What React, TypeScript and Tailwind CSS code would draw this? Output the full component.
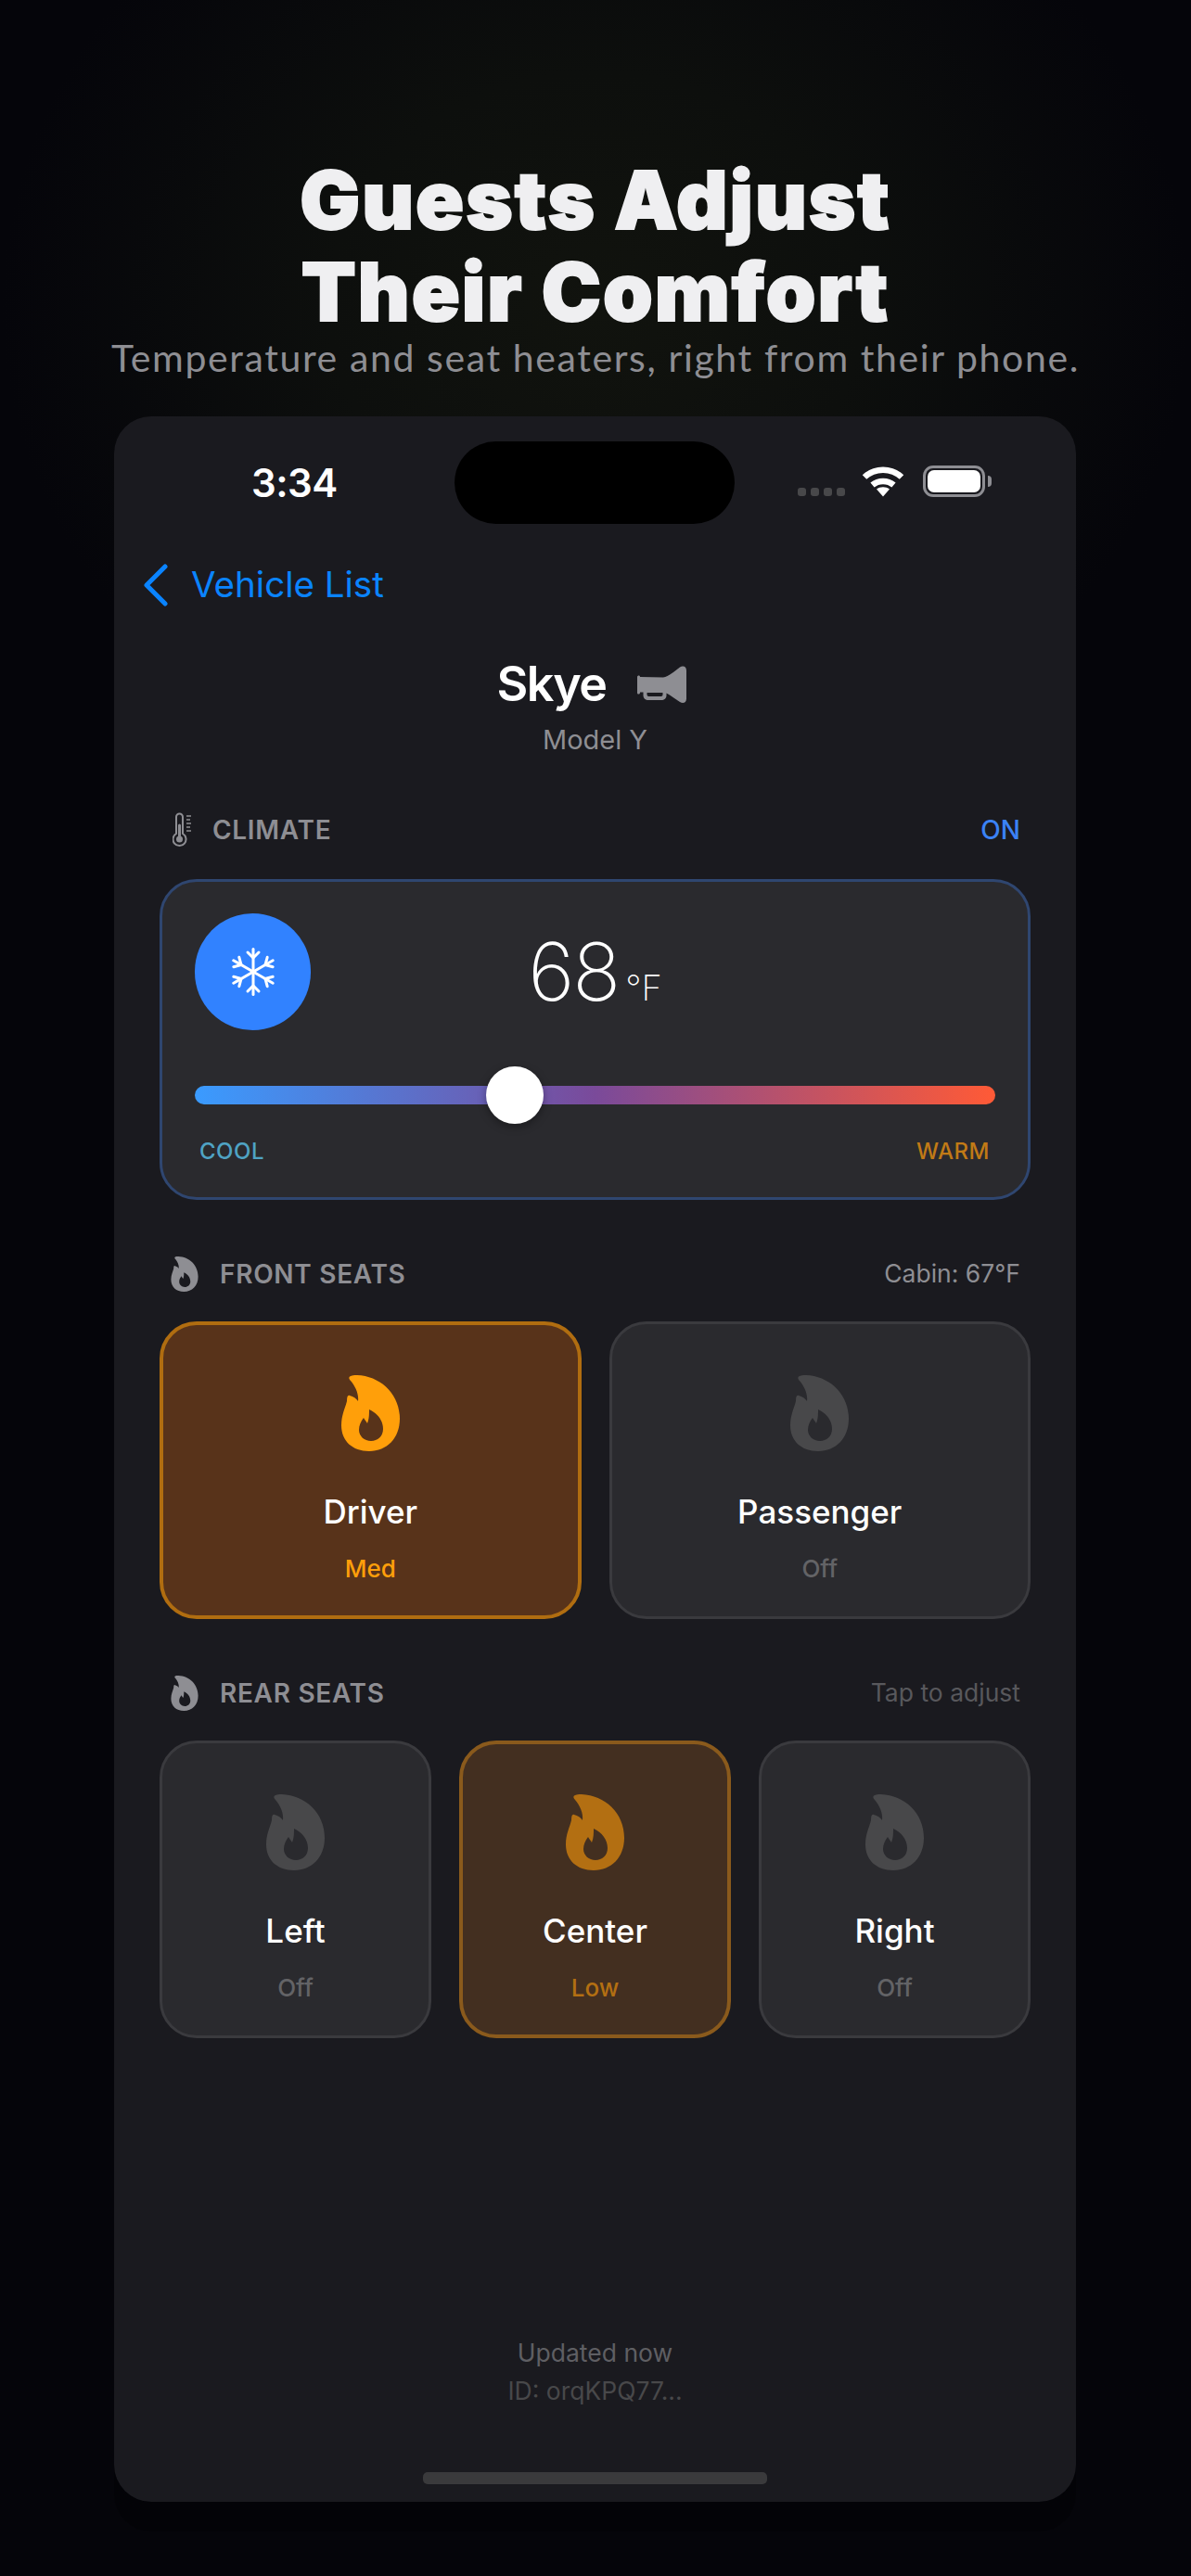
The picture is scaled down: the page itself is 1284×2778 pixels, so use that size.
import React from "react";

const Flame = ({ color, w = 63, h = 82 }: { color: string; w?: number; h?: number }) => (
  <svg width={w} height={h} viewBox="0 0 63 82" className="block shrink-0">
    <path
      fill={color}
      fillRule="evenodd"
      d="M9 1.5C11 0 14 0 17 0C42 1 63 20 63 47C63 68 49 82 30 82C12 82 0 71 0 54C0 43 4 36 6 28C6 23 7 21 9 22C13 23 16 25 18 28C19 20 15 12 10 6C8 4 8 2.5 9 1.5ZM30 37C39 41 45 49 45 58C45 66 39 71 32 71C25 71 19 66 19 59C19 54 21 50 24 46C25 48 27 50 28 52C30 47 30 42 30 37Z"
    />
  </svg>
);

const Horn = () => (
  <svg width={54} height={42} viewBox="0 0 54 42" className="block">
    <path
      fill="#8e8e93"
      fillRule="evenodd"
      d="M0 13C0 12 1 11.500 1.500 11.500C2.500 11.500 3 12 3 13L28 13.500C34 12.500 40 7 46 2.500C49 0.500 53 1.500 53 6V36.500C53 41 49 42 46 40C41 37 36 33 31.500 30.500V33C31.500 36 29 38 26 38H12C9 38 6.500 36 6.500 33V29.500H3C3 31 2.500 31.500 1.500 31.500C0.500 31.500 0 31 0 30ZM10.500 30V32C10.500 33.500 11.500 34 13 34H25C26.500 34 27.500 33.500 27.500 32V30Z"
    />
  </svg>
);

const Thermometer = () => (
  <svg width={22} height={38} viewBox="0 0 22 38" fill="none" stroke="#8e8e93" className="block shrink-0">
    <path strokeWidth="2" d="M4 23V5a3.500 3.500 0 0 1 7 0V23a7 7 0 1 1-7 0Z" />
    <path strokeWidth="3" strokeLinecap="round" d="M7.500 14V29" />
    <circle cx="7.500" cy="29" r="3.500" fill="#8e8e93" stroke="none" />
    <path strokeWidth="1.500" d="M15 4h5M15 8h4M15 12h5M15 16h4M15 20h5" />
  </svg>
);

const Snowflake = () => (
  <svg width={52} height={52} viewBox="0 0 52 52" fill="none" stroke="#fff" strokeWidth="3" strokeLinecap="round" strokeLinejoin="round" className="block">
    {[0, 60, 120, 180, 240, 300].map((a) => (
      <g key={a} transform={`rotate(${a} 26 26)`}>
        <path d="M26 26V1.500" />
        <path d="M20 5l6 6 6-6" />
      </g>
    ))}
  </svg>
);

const Wifi = () => (
  <svg width={46} height={34} viewBox="0 0 46 34" fill="none" className="block">
    <path stroke="#fff" strokeWidth="6.500" d="M3 12.500C14 2 32 2 43 12.500" />
    <path stroke="#fff" strokeWidth="6.500" d="M11.500 21C18 15.500 28 15.500 34.500 21" />
    <path fill="#fff" d="M16 25.500C20 22.500 26 22.500 30 25.500L23 33.500Z" />
  </svg>
);

const SectionHeader = ({ icon, title, right, rightClass, gap, inset }: { icon: React.ReactNode; title: string; right: string; rightClass: string; gap: string; inset: string }) => (
  <div className={`flex h-10 items-center justify-between pr-[11px] ${inset}`}>
    <div className={`flex items-center ${gap}`}>
      {icon}
      <span className="text-[28px] font-semibold tracking-[0.7px] text-[#8e8e93]">{title}</span>
    </div>
    <span className={rightClass}>{right}</span>
  </div>
);

type Seat = { name: string; level: string; state: "off" | "low" | "med" };

const seatStyles = {
  off: { card: "border-[3px] border-[#3a3a3e] bg-[#2a2a2e] pt-[55px]", flame: "#48484a", level: "text-[#636366]" },
  low: { card: "border-4 border-[#8a5a1c] bg-[#432f20] pt-[54px]", flame: "#b36f12", level: "text-[#b36f12]" },
  med: { card: "border-4 border-[#b06d10] bg-[#58331a] pt-[54px]", flame: "#ff9f0a", level: "text-[#ff9f0a]" },
};

const SeatCard = ({ seat }: { seat: Seat }) => {
  const s = seatStyles[seat.state];
  return (
    <div className={`flex h-[321px] flex-col items-center rounded-[40px] ${s.card}`}>
      <Flame color={s.flame} />
      <div className="mt-[40px] text-[35px] leading-[50px] font-medium text-white">{seat.name}</div>
      <div className={`mt-[19px] text-[26px] leading-9 font-medium ${s.level}`}>{seat.level}</div>
    </div>
  );
};

export default function App() {
  return (
    <div className="flex h-[2778px] w-[1284px] flex-col items-center overflow-hidden bg-[#05050a] bg-[radial-gradient(ellipse_640px_560px_at_642px_330px,#11130e_0%,#0d0f0d_45%,#05050a_100%)] font-['Inter',sans-serif]">
      <h1 className="mt-[167px] text-center text-[86px] leading-[99px] font-black tracking-[2px] text-[#efeff1] [-webkit-text-stroke:2px_#efeff1]">
        Guests Adjust
        <br />
        Their Comfort
      </h1>
      <p className="mt-[-4px] font-['Lato',sans-serif] text-[41px] leading-[50px] tracking-[1.6px] text-[#8e8e93]">
        Temperature and seat heaters, right from their phone.
      </p>

      <div className="mt-[38px] mr-[1px] flex h-[2249px] w-[1037px] flex-col rounded-[40px] bg-[#1a1a1f] px-[49px] shadow-[0_32px_0_0_rgba(0,0,0,0.25)]">
        {/* status bar */}
        <div className="mx-[-49px] mt-[27px] flex h-[89px] items-center">
          <div className="w-[367px] pl-[148px] text-[42px] leading-none font-semibold tracking-[-0.5px] text-white">3:34</div>
          <div className="h-[89px] w-[302px] rounded-full bg-black" />
          <div className="mb-[3px] flex items-end pl-[68px]">
            <div className="mb-[1px] flex gap-[5px]">
              {[0, 1, 2, 3].map((i) => (
                <div key={i} className="h-[9px] w-[9px] rounded-[3px] bg-[#48484a]" />
              ))}
            </div>
            <div className="ml-[18px]">
              <Wifi />
            </div>
            <div className="ml-[20px] flex items-center">
              <div className="flex h-[34px] w-[67px] items-center justify-center rounded-[11px] border-[3px] border-[#8e8e93]">
                <div className="h-[24px] w-[57px] rounded-[7px] bg-white" />
              </div>
              <div className="ml-[3px] h-[12px] w-[4px] rounded-r-full bg-[#8e8e93]" />
            </div>
          </div>
        </div>

        {/* back link */}
        <div className="mx-[-49px] mt-[41px] flex h-[50px] items-center pl-[31px]">
          <svg width={27} height={46} viewBox="0 0 27 46" fill="none" className="block">
            <path d="M24 3L4 23L24 43" stroke="#0a84ff" strokeWidth="5" strokeLinecap="round" strokeLinejoin="round" />
          </svg>
          <span className="ml-[25px] text-[38.5px] text-[#0a84ff]">Vehicle List</span>
        </div>

        {/* vehicle */}
        <div className="mt-[52px] flex h-[60px] items-center justify-center gap-[33px] pr-[7px]">
          <span className="text-[52px] leading-none font-semibold tracking-[-1.500px] text-white">Skye</span>
          <Horn />
        </div>
        <div className="mt-[10px] h-10 text-center text-[29px] leading-10 text-[#8e8e93]">Model Y</div>

        {/* climate */}
        <div className="mt-[57px]">
          <SectionHeader
            icon={<Thermometer />}
            title="CLIMATE"
            right="ON"
            rightClass="text-[28px] font-medium text-[#3b82f6]"
            gap="gap-[21px]"
            inset="pl-[14px]"
          />
        </div>
        <div className="mt-[33px] h-[346px] rounded-[40px] border-[3px] border-[#2f4670] bg-[#2a2a2e] px-[35px] pt-[34px]">
          <div className="grid h-[126px] grid-cols-[125px_1fr_125px] items-center">
            <div className="flex h-[126px] w-[125px] items-center justify-center rounded-full bg-[#3182ff]">
              <Snowflake />
            </div>
            <div className="flex items-baseline justify-center text-white">
              <span className="text-[86px] leading-none font-[250] tracking-[-2px]">68</span>
              <span className="ml-[7px] text-[38px] leading-none font-[250]">°F</span>
            </div>
          </div>
          <div className="relative mt-[60px] h-5 rounded-full bg-[linear-gradient(90deg,#3a9bff_0%,#7a4a9a_50%,#ff5a36_100%)]">
            <div className="absolute top-[-21px] left-[314px] h-[62px] w-[62px] rounded-full bg-white shadow-[0_3px_10px_rgba(0,0,0,0.35)]" />
          </div>
          <div className="mt-[36px] flex justify-between pr-[6px] pl-[5px] text-[24px] leading-[30px] font-medium tracking-[0.5px]">
            <span className="text-[#4fa3c4]">COOL</span>
            <span className="text-[#c17a16]">WARM</span>
          </div>
        </div>

        {/* front seats */}
        <div className="mt-[60px]">
          <SectionHeader
            icon={<Flame color="#8e8e93" w={30} h={38} />}
            title="FRONT SEATS"
            right="Cabin: 67°F"
            rightClass="text-[26.5px] text-[#8e8e93]"
            gap="gap-[23px]"
            inset="pl-3"
          />
        </div>
        <div className="mt-[31px] grid grid-cols-2 gap-[30px]">
          <SeatCard seat={{ name: "Driver", level: "Med", state: "med" }} />
          <SeatCard seat={{ name: "Passenger", level: "Off", state: "off" }} />
        </div>

        {/* rear seats */}
        <div className="mt-[60px]">
          <SectionHeader
            icon={<Flame color="#8e8e93" w={30} h={38} />}
            title="REAR SEATS"
            right="Tap to adjust"
            rightClass="text-[26.5px] text-[#58585c]"
            gap="gap-[23px]"
            inset="pl-3"
          />
        </div>
        <div className="mt-[31px] grid grid-cols-3 gap-[30px]">
          <SeatCard seat={{ name: "Left", level: "Off", state: "off" }} />
          <SeatCard seat={{ name: "Center", level: "Low", state: "low" }} />
          <SeatCard seat={{ name: "Right", level: "Off", state: "off" }} />
        </div>

        {/* footer */}
        <div className="mt-auto text-center text-[26.5px] leading-[41px]">
          <div className="text-[#5f5f63]">Updated now</div>
          <div className="text-[#48484a]">ID: orqKPQ77...</div>
        </div>
        <div className="mt-[67px] mb-[19px] h-[13px] w-[371px] self-center rounded-[5px] bg-[#3a3a3c]" />
      </div>
    </div>
  );
}
